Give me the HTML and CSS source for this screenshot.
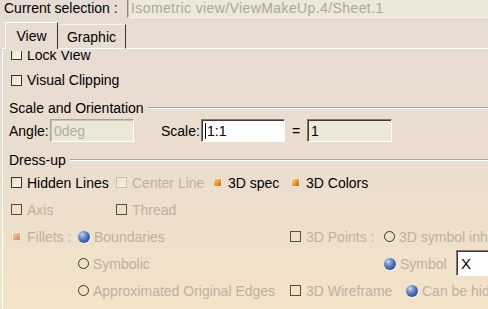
FILE: index.html
```html
<!DOCTYPE html>
<html lang="en">
<head>
    <meta charset="UTF-8">
    <meta name="viewport" content="width=device-width, initial-scale=1.0">
    <title>View Properties</title>
    <link rel="stylesheet" href="styles.css">
</head>
<body>
<div class="selection-bar">
    <span class="selection-label">Current selection :</span>
    <span class="selection-field">Isometric view/ViewMakeUp.4/Sheet.1</span>
</div>
<div class="tabs">
    <span class="tab-edge"></span>
    <span class="tab active">View</span>
    <span class="tab">Graphic</span>
    <span class="tab-fill"></span>
</div>
<div class="panel">
    <div class="panel-scroll">
        <label class="row"><span class="cb"></span>Lock View</label>
        <label class="row"><span class="cb"></span>Visual Clipping</label>

        <div class="group-title">Scale and Orientation</div>
        <div class="scale-row">
            <span>Angle:</span>
            <span class="field disabled">0deg</span>
            <span></span>
            <span>Scale:</span>
            <span class="field"><span class="caret"></span>1:1</span>
            <span class="equals">=</span>
            <span class="field readonly">1</span>
        </div>

        <div class="group-title">Dress-up</div>
        <div class="dress-grid">
            <label class="item c2 r1"><span class="cb"></span>Hidden Lines</label>
            <label class="item c4 r1 off"><span class="cb off"></span>Center Line</label>
            <label class="item c5 r1"><span class="cb on"></span>3D spec</label>
            <label class="item c6 r1"><span class="cb on"></span>3D Colors</label>

            <label class="item c2 r2 off"><span class="cb dim"></span>Axis</label>
            <label class="item c4 r2 off"><span class="cb dim"></span>Thread</label>

            <label class="item c2 r3 off"><span class="cb on off"></span>Fillets :</label>
            <label class="item c3 r3 off"><span class="rb on"></span>Boundaries</label>
            <label class="item c6 r3 off"><span class="cb dim"></span>3D Points :</label>
            <label class="item c7 r3 off"><span class="rb"></span>3D symbol inherited</label>

            <label class="item c3 r4 off"><span class="rb"></span>Symbolic</label>
            <label class="item c7 r4 off"><span class="rb on"></span>Symbol</label>
            <span class="item c9 r4 field symbol-field">X</span>

            <label class="item c3 r5 off"><span class="rb"></span>Approximated Original Edges</label>
            <label class="item c6 r5 off"><span class="cb dim"></span>3D Wireframe</label>
            <label class="item c8 r5 off"><span class="rb on"></span>Can be hidden</label>
        </div>
    </div>
</div>
</body>
</html>
```

FILE: styles.css
```css
html, body {
    width: 488px;
    height: 309px;
    overflow: hidden;
}

body {
    margin: 0;
    background: linear-gradient(to bottom, #e6dcd3 0%, #eaddcf 50%, #f3e3c8 100%);
    font-family: "Liberation Sans", "DejaVu Sans Condensed", sans-serif;
    font-size: 14px;
    color: #000;
}

/* top line */
.selection-bar {
    display: flex;
    height: 18px;
    margin-bottom: 4px;
}

.selection-label {
    width: 123px;
    padding-left: 4px;
    line-height: 17px;
    white-space: nowrap;
}

.selection-field {
    flex: 1;
    height: 17px;
    padding-left: 3px;
    line-height: 17px;
    letter-spacing: 0.4px;
    background: #ece9d9;
    border-left: 1px solid #8a877c;
    box-shadow: inset 1px 0 #c4c0b2;
    border-bottom: 1px solid #f6f3ea;
    color: #aca797;
    white-space: nowrap;
}

/* tabs */
.tabs {
    display: flex;
    align-items: flex-start;
    height: 27px;
}

.tab-edge {
    align-self: flex-end;
    width: 3px;
    margin-left: 2px;
    border-bottom: 1px solid #fff;
}

.tab {
    box-sizing: border-box;
    display: flex;
    justify-content: center;
    align-items: center;
    white-space: nowrap;
}

.tab.active {
    width: 53px;
    height: 27px;
    padding-bottom: 1px;
    border-top: 1px solid #fff;
    border-left: 1px solid #fff;
    border-right: 1px solid #333;
}

.tab:not(.active) {
    width: 68px;
    height: 25px;
    margin-top: 2px;
    border-top: 1px solid #f7f2ec;
    border-right: 1px solid #333;
    border-bottom: 1px solid #fff;
}

.tab-fill {
    flex: 1;
    align-self: flex-end;
    border-bottom: 1px solid #fff;
}

/* panel */
.panel {
    height: 260px;
    margin-left: 2px;
    border-left: 1px solid #fff;
}

.panel-scroll {
    height: 258px;
    margin-top: 2px;
    overflow: hidden;
}

.row {
    display: flex;
    align-items: center;
    gap: 5px;
    height: 26px;
    padding-left: 8px;
    white-space: nowrap;
}

.row:first-child {
    height: 25px;
    margin-top: -9px;
}

.group-title {
    display: flex;
    align-items: center;
    gap: 4px;
    height: 18px;
    margin-top: 6px;
    padding-left: 6px;
    white-space: nowrap;
}

.group-title::after {
    content: "";
    flex: 1;
    border-top: 1px solid #aaa498;
    border-bottom: 1px solid #fff;
    margin-top: -1px;
}

.scale-row + .group-title {
    margin-top: 9px;
}

.scale-row {
    display: grid;
    grid-template-columns: 41px 84px 27px 40px 84px 22px 85px;
    align-items: center;
    height: 23px;
    margin-top: 2px;
    padding-left: 6px;
}

.equals {
    text-align: center;
}

/* text fields */
.field {
    box-sizing: border-box;
    display: flex;
    align-items: center;
    height: 23px;
    padding-left: 3px;
    background: #fff;
    border: 1px solid;
    border-color: #80796d #fff #fff #80796d;
    box-shadow: inset 1px 1px #3e3a34;
    white-space: nowrap;
}

.field.disabled {
    background: #ebe8d8;
    color: #b2ad9d;
    border-color: #a7a295 #fff #fff #a7a295;
    box-shadow: inset 1px 1px #c8c3b4;
}

.field.readonly {
    background: #ece9d9;
}

.caret {
    width: 0;
    height: 16px;
    border-left: 1px solid #000;
    margin-right: 1px;
}

/* dress-up grid */
.dress-grid {
    display: grid;
    grid-template-columns: 8px 67px 38px 96px 78px 94px 22px 50px minmax(0, 1fr);
    grid-template-rows: repeat(5, 27px);
}

.item {
    display: flex;
    align-items: center;
    gap: 5px;
    white-space: nowrap;
    min-width: 0;
}

.item.off {
    color: #bab2a2;
}

.c2 { grid-column: 2; }
.c3 { grid-column: 3; }
.c4 { grid-column: 4; }
.c5 { grid-column: 5; }
.c6 { grid-column: 6; }
.c7 { grid-column: 7; }
.c8 { grid-column: 8; }
.c9 { grid-column: 9; }
.r1 { grid-row: 1; }
.r2 { grid-row: 2; }
.r3 { grid-row: 3; }
.r4 { grid-row: 4; }
.r5 { grid-row: 5; }

.symbol-field {
    width: 44px;
    height: 26px;
    padding-left: 4px;
    font-size: 15px;
}

/* check boxes */
.cb {
    box-sizing: border-box;
    flex: none;
    width: 11px;
    height: 11px;
    border: 1px solid #3d3526;
    background: linear-gradient(135deg, #e4dfc4, #fbf9ee);
    display: flex;
    justify-content: center;
    align-items: center;
}

.cb.off {
    border-color: #cbc1ac;
    background: linear-gradient(135deg, #ebe4d3, #f6f0e2);
}

.cb.dim {
    border-color: #5d4d36;
    background: transparent;
}

.cb.on {
    border-color: #eadbc2;
    background: #f5ecdc;
}

.cb.on::after {
    content: "";
    width: 7px;
    height: 7px;
    background: linear-gradient(135deg, #fbd49a, #ea9436 55%, #c9600f);
}

.cb.on.off::after {
    background: linear-gradient(135deg, #f3d2b2, #e4a77a 55%, #d08c5e);
}

/* radio buttons */
.rb {
    box-sizing: border-box;
    flex: none;
    width: 11px;
    height: 11px;
    margin-right: -1px;
    border: 1px solid #3f3222;
    border-radius: 50%;
}

.rb.on {
    width: 12px;
    height: 12px;
    border: none;
    background: radial-gradient(circle at 35% 30%, #dfe7f7 0, #8aa4d8 20%, #4469b4 55%, #243f82 100%);
    box-shadow: 1px 1px 1px rgba(255, 255, 255, 0.8);
}
```
